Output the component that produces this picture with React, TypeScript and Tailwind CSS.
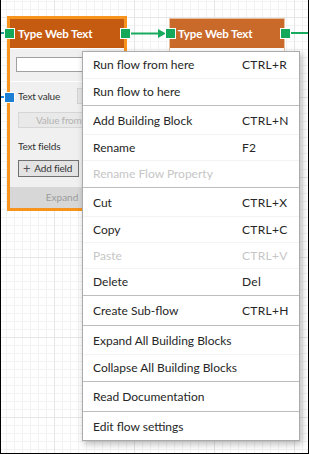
import React from 'react'

type Item = { label: string; shortcut?: string; disabled?: boolean }

const groups: Item[][] = [
  [
    { label: 'Run flow from here', shortcut: 'CTRL+R' },
    { label: 'Run flow to here' },
  ],
  [
    { label: 'Add Building Block', shortcut: 'CTRL+N' },
    { label: 'Rename', shortcut: 'F2' },
    { label: 'Rename Flow Property', disabled: true },
  ],
  [
    { label: 'Cut', shortcut: 'CTRL+X' },
    { label: 'Copy', shortcut: 'CTRL+C' },
    { label: 'Paste', shortcut: 'CTRL+V', disabled: true },
    { label: 'Delete', shortcut: 'Del' },
  ],
  [{ label: 'Create Sub-flow', shortcut: 'CTRL+H' }],
  [{ label: 'Expand All Building Blocks' }, { label: 'Collapse All Building Blocks' }],
  [{ label: 'Read Documentation' }],
  [{ label: 'Edit flow settings' }],
]

function Port({ className }: { className: string }) {
  return <div className={'absolute w-[11px] h-[11px] border border-white ' + className} />
}

function ContextMenu() {
  return (
    <div className="absolute left-[81px] top-[51px] w-[218px] bg-white border border-[#ababab] shadow-[2px_3px_7px_rgba(0,0,0,0.28)]">
      {groups.map((g, gi) => (
        <div key={gi}>
          {gi > 0 && (
            <div className="h-[4px] pt-[1px]">
              <div className="border-t border-[#bdbdbd]" />
            </div>
          )}
          {g.map((it, i) => (
            <div
              key={it.label}
              className={
                'flex items-center h-[26px] pl-[10px] text-[12px] ' +
                (i > 0 ? 'border-t border-[#f3f3f3] ' : '') +
                (it.disabled ? 'text-[#c6c6c6]' : 'text-[#262626]')
              }
            >
              <span className="flex-1 whitespace-nowrap">{it.label}</span>
              {it.shortcut && <span className="w-[57px] tracking-[0.3px]">{it.shortcut}</span>}
            </div>
          ))}
        </div>
      ))}
    </div>
  )
}

export default function App() {
  return (
    <div
      className="relative w-[309px] h-[454px] overflow-hidden bg-white border-x border-b border-black font-['Segoe_UI','Lato',sans-serif] bg-[linear-gradient(to_right,#e6e6e6_1px,transparent_1px),linear-gradient(to_bottom,#e6e6e6_1px,transparent_1px),linear-gradient(to_right,#f2f2f2_1px,transparent_1px),linear-gradient(to_bottom,#f2f2f2_1px,transparent_1px)] bg-size-[80px_80px,80px_80px,8px_8px,8px_8px] bg-position-[53px_17px,53px_17px,5px_1px,5px_1px]"
    >
      {/* incoming links */}
      <div className="absolute left-0 top-[32px] w-[4px] h-[2px] bg-[#2a9d8f]" />
      <div className="absolute left-0 top-[96px] w-[4px] h-[2px] bg-[#1b7fd6]" />

      {/* node 1 (selected) */}
      <div className="absolute left-[6px] top-[16px] w-[120px] border-[3px] border-[#f7941d] bg-[#f0f0f0]">
        <div className="h-[29px] bg-[#c55a11] px-[8px] flex items-center text-white font-bold text-[11.5px] tracking-[-0.1px]">
          Type Web Text
        </div>
        <div className="border-t border-white pt-[8px] pl-[6px]">
          <div className="h-[15px] bg-white border border-[#a0a0a0]" />
        </div>
        <div className="mt-[9px] border-t border-white px-[8px] text-[10px] text-[#333] tracking-[-0.2px]">
          <div className="flex items-center h-[16px] mt-[6px] gap-[17px]">
            <span className="whitespace-nowrap">Text value</span>
            <div className="flex-1 h-[16px] bg-[#e6e6e6] border border-[#d3d3d3]" />
          </div>
          <div className="mt-[8px] h-[16px] bg-[#e9e9e9] border border-[#d6d6d6] pl-[17px] flex items-center text-[#b3b3b3] whitespace-nowrap">
            Value from i
          </div>
          <div className="mt-[11px] h-[14px] flex items-center">Text fields</div>
          <div className="mt-[7px] mb-[10px] w-[61px] h-[17px] bg-[#e3e3e3] border border-[#707070] flex items-center gap-[4px] pl-[4px] whitespace-nowrap">
            <span className="text-[13px] leading-none text-[#555]">+</span>
            <span>Add field</span>
          </div>
        </div>
        <div className="h-[21px] bg-[#d7d7d7] flex items-center justify-center text-[10px] text-[#9c9c9c]">
          Expand <span className="ml-[3px] text-[7px]">▼</span>
        </div>
      </div>

      <Port className="left-[3px] top-[28px] bg-[#14a85a]" />
      <Port className="left-[119px] top-[28px] bg-[#14a85a]" />
      <Port className="left-[3px] top-[92px] bg-[#1b7fd6]" />

      {/* link node1 -> node2 */}
      <svg className="absolute left-[130px] top-[28px]" width="40" height="12">
        <line x1="0" y1="5.5" x2="28" y2="5.5" stroke="#19ab5d" strokeWidth="2" />
        <polygon points="27,1 35,5.5 27,10" fill="#19ab5d" />
      </svg>

      {/* node 2 */}
      <div className="absolute left-[168px] top-[18px] w-[116px] border border-[#e8c0a0] bg-white">
        <div className="h-[29px] bg-[#c96a2b] px-[8px] flex items-center text-white font-bold text-[11.5px] tracking-[-0.1px]">
          Type Web Text
        </div>
        <div className="h-[20px] border-t border-white" />
      </div>
      <Port className="left-[164px] top-[28px] bg-[#14a85a]" />
      <Port className="left-[279px] top-[28px] bg-[#14a85a]" />
      <div className="absolute left-[290px] top-[32px] w-[19px] h-[2px] bg-[#19ab5d]" />

      <ContextMenu />
    </div>
  )
}
